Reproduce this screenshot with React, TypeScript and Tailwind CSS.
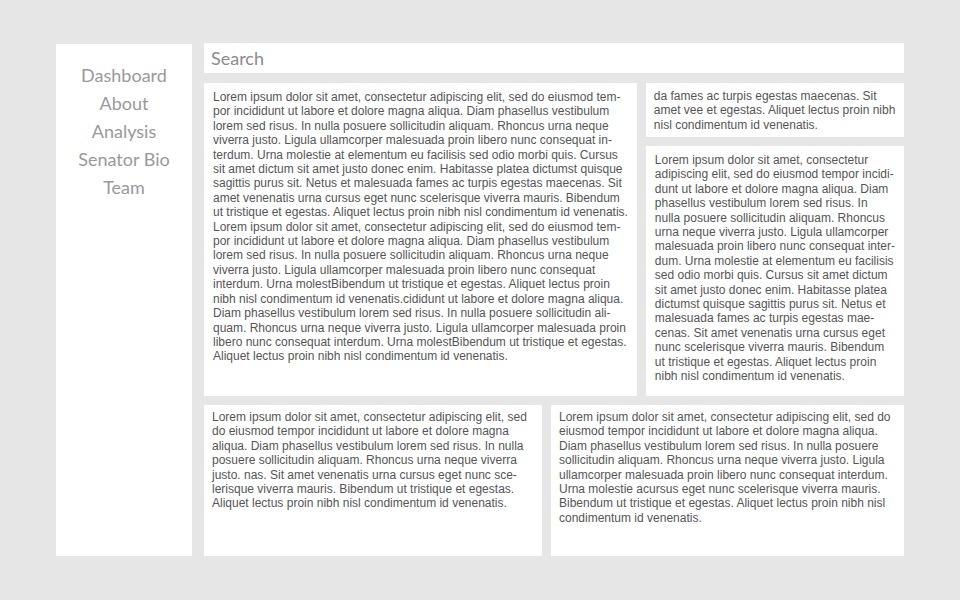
import React from "react";

const mainText = [
  "Lorem ipsum dolor sit amet, consectetur adipiscing elit, sed do eiusmod tem-",
  "por incididunt ut labore et dolore magna aliqua. Diam phasellus vestibulum",
  "lorem sed risus. In nulla posuere sollicitudin aliquam. Rhoncus urna neque",
  "viverra justo. Ligula ullamcorper malesuada proin libero nunc consequat in-",
  "terdum. Urna molestie at elementum eu facilisis sed odio morbi quis. Cursus",
  "sit amet dictum sit amet justo donec enim. Habitasse platea dictumst quisque",
  "sagittis purus sit. Netus et malesuada fames ac turpis egestas maecenas. Sit",
  "amet venenatis urna cursus eget nunc scelerisque viverra mauris. Bibendum",
  "ut tristique et egestas. Aliquet lectus proin nibh nisl condimentum id venenatis.",
  "Lorem ipsum dolor sit amet, consectetur adipiscing elit, sed do eiusmod tem-",
  "por incididunt ut labore et dolore magna aliqua. Diam phasellus vestibulum",
  "lorem sed risus. In nulla posuere sollicitudin aliquam. Rhoncus urna neque",
  "viverra justo. Ligula ullamcorper malesuada proin libero nunc consequat",
  "interdum. Urna molestBibendum ut tristique et egestas. Aliquet lectus proin",
  "nibh nisl condimentum id venenatis.cididunt ut labore et dolore magna aliqua.",
  "Diam phasellus vestibulum lorem sed risus. In nulla posuere sollicitudin ali-",
  "quam. Rhoncus urna neque viverra justo. Ligula ullamcorper malesuada proin",
  "libero nunc consequat interdum. Urna molestBibendum ut tristique et egestas.",
  "Aliquet lectus proin nibh nisl condimentum id venenatis.",
];

const topRightText = [
  "da fames ac turpis egestas maecenas. Sit",
  "amet vee et egestas. Aliquet lectus proin nibh",
  "nisl condimentum id venenatis.",
];

const sideText = [
  "Lorem ipsum dolor sit amet, consectetur",
  "adipiscing elit, sed do eiusmod tempor incidi-",
  "dunt ut labore et dolore magna aliqua. Diam",
  "phasellus vestibulum lorem sed risus. In",
  "nulla posuere sollicitudin aliquam. Rhoncus",
  "urna neque viverra justo. Ligula ullamcorper",
  "malesuada proin libero nunc consequat inter-",
  "dum. Urna molestie at elementum eu facilisis",
  "sed odio morbi quis. Cursus sit amet dictum",
  "sit amet justo donec enim. Habitasse platea",
  "dictumst quisque sagittis purus sit. Netus et",
  "malesuada fames ac turpis egestas mae-",
  "cenas. Sit amet venenatis urna cursus eget",
  "nunc scelerisque viverra mauris. Bibendum",
  "ut tristique et egestas. Aliquet lectus proin",
  "nibh nisl condimentum id venenatis.",
];

const bottomLeftText = [
  "Lorem ipsum dolor sit amet, consectetur adipiscing elit, sed",
  "do eiusmod tempor incididunt ut labore et dolore magna",
  "aliqua. Diam phasellus vestibulum lorem sed risus. In nulla",
  "posuere sollicitudin aliquam. Rhoncus urna neque viverra",
  "justo. nas. Sit amet venenatis urna cursus eget nunc sce-",
  "lerisque viverra mauris. Bibendum ut tristique et egestas.",
  "Aliquet lectus proin nibh nisl condimentum id venenatis.",
];

const bottomRightText = [
  "Lorem ipsum dolor sit amet, consectetur adipiscing elit, sed do",
  "eiusmod tempor incididunt ut labore et dolore magna aliqua.",
  "Diam phasellus vestibulum lorem sed risus. In nulla posuere",
  "sollicitudin aliquam. Rhoncus urna neque viverra justo. Ligula",
  "ullamcorper malesuada proin libero nunc consequat interdum.",
  "Urna molestie acursus eget nunc scelerisque viverra mauris.",
  "Bibendum ut tristique et egestas. Aliquet lectus proin nibh nisl",
  "condimentum id venenatis.",
];

const navItems = ["Dashboard", "About", "Analysis", "Senator Bio", "Team"];

function TextBox({ lines, className }: { lines: string[]; className?: string }) {
  return (
    <div className={"bg-white overflow-hidden text-[12px] leading-[14.4px] text-[#555] font-['Liberation_Sans',Arial,sans-serif] " + (className ?? "")}>
      {lines.map((l, i) => (
        <div key={i} className="whitespace-nowrap">{l}</div>
      ))}
    </div>
  );
}

export default function App() {
  return (
    <div className="w-[960px] h-[600px] bg-[#e6e6e6] flex gap-3 pl-14 pt-[43px]">
      {/* sidebar nav */}
      <nav className="w-[136px] h-[512px] mt-px bg-white pt-[17px] flex flex-col items-center text-[18px] leading-[28px] text-[#999] font-['Lato',sans-serif]">
        {navItems.map((n) => (
          <a key={n} className="cursor-pointer">{n}</a>
        ))}
      </nav>

      {/* main column */}
      <div className="w-[700px] flex flex-col">
        <div className="h-[30px] bg-white flex items-center px-[7px] text-[18px] text-[#8c8c8c] font-['Lato',sans-serif]">
          Search
        </div>

        <div className="mt-[10px] flex gap-[9px] h-[313px]">
          <TextBox lines={mainText} className="w-[433px] px-[9px] pt-[7px]" />
          <div className="flex-1 flex flex-col gap-[9px]">
            <TextBox lines={topRightText} className="h-[54px] px-[8px] pt-[6px]" />
            <TextBox lines={sideText} className="flex-1 px-[9px] pt-[7px]" />
          </div>
        </div>

        <div className="mt-[9px] flex gap-[9px] h-[151px]">
          <TextBox lines={bottomLeftText} className="w-[338px] px-[8px] pt-[5px]" />
          <TextBox lines={bottomRightText} className="flex-1 px-[8px] pt-[5px]" />
        </div>
      </div>
    </div>
  );
}
